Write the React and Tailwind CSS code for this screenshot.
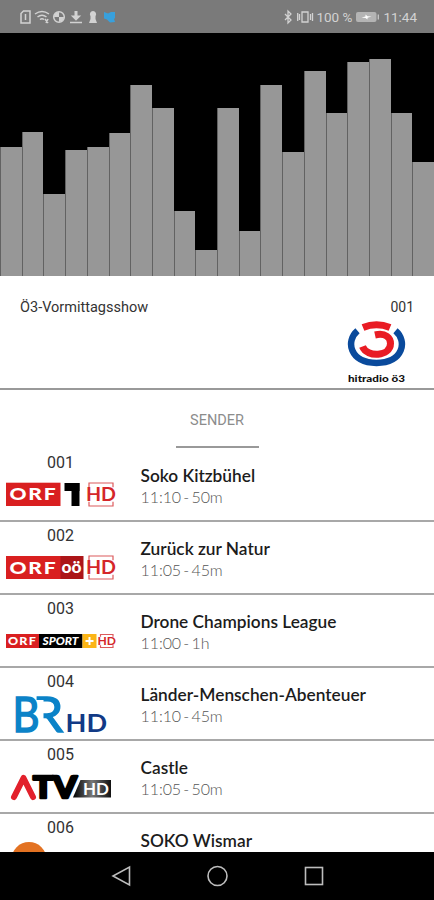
import React from 'react';

const bars = [129, 144, 82, 126, 129, 143, 191, 168, 65, 26, 168, 45, 191, 124, 205, 163, 214, 217, 163, 114];

const HdBadge = ({ x, y, width, height }) => (
    <g>
        <path
            d={`M${x + 2} ${y + height * 0.2}V${y + 0.5}H${x + width - 2}V${y + height * 0.2}M${x + 2} ${y + height * 0.8}V${y + height - 0.5}H${x + width - 2}V${y + height * 0.8}`}
            fill="none"
            stroke="#dc5a5c"
            strokeWidth="1.2"
        />
        <text
            x={x - 1}
            y={y + height * 0.76}
            textLength={width + 2}
            lengthAdjust="spacingAndGlyphs"
            fontSize={height * 0.75}
            fontWeight="700"
            fill="#d5262a"
        >
            HD
        </text>
    </g>
);

const OrfOneLogo = () => (
    <>
        <rect x="6" y="10.7" width="54.5" height="23.3" fill="#d91f20" />
        <text x="9.5" y="28.3" textLength="48" lengthAdjust="spacingAndGlyphs" letterSpacing="1.5" fontSize="17.5" fontWeight="900" fill="#fff">ORF</text>
        <rect x="64.5" y="11" width="15" height="8" fill="#000" />
        <rect x="71.5" y="11" width="8" height="23" fill="#000" />
        <HdBadge x={87} y={10.5} width={28} height={24} />
    </>
);

const OrfRegionLogo = () => (
    <>
        <rect x="6" y="11" width="55" height="23" fill="#d91f20" />
        <rect x="60.5" y="11" width="23" height="23" fill="#ac1518" />
        <text x="9.5" y="28.5" textLength="48" lengthAdjust="spacingAndGlyphs" letterSpacing="1.5" fontSize="17.5" fontWeight="900" fill="#fff">ORF</text>
        <text x="61.5" y="27.5" textLength="20" lengthAdjust="spacingAndGlyphs" fontSize="16" fontWeight="900" fill="#fff">oö</text>
        <HdBadge x={87} y={10.5} width={28} height={24} />
    </>
);

const OrfSportLogo = () => (
    <>
        <rect x="6" y="16" width="33" height="14" fill="#d91f20" />
        <rect x="39" y="16" width="43.5" height="14" fill="#000" />
        <rect x="82.5" y="16" width="14" height="14" fill="#fbb516" />
        <text x="8" y="26.8" textLength="29" lengthAdjust="spacingAndGlyphs" letterSpacing="1" fontSize="10.5" fontWeight="900" fill="#fff">ORF</text>
        <text x="42.5" y="26.8" textLength="36" lengthAdjust="spacingAndGlyphs" fontSize="10.5" fontWeight="900" fontStyle="italic" fill="#fff">SPORT</text>
        <path d="M89.5 19v8M85.5 23h8" stroke="#fff" strokeWidth="2" />
        <HdBadge x={98.5} y={16} width={16.5} height={14} />
    </>
);

const BrLogo = () => (
    <>
        <text x="33" y="40.7" textLength="30" lengthAdjust="spacingAndGlyphs" fontSize="49" fill="#0b83c8" stroke="#0b83c8" strokeWidth="1.6">R</text>
        {/* the R has no stem of its own */}
        <rect x="35" y="9" width="8.5" height="34" fill="#fff" />
        <text x="12.5" y="40.7" textLength="27" lengthAdjust="spacingAndGlyphs" fontSize="49" fill="#0b83c8" stroke="#0b83c8" strokeWidth="1.6">B</text>
        <text x="65.5" y="40.7" textLength="41.5" lengthAdjust="spacingAndGlyphs" fontSize="25.5" fontWeight="700" fill="#123a86">HD</text>
    </>
);

const AtvLogo = () => (
    <>
        <defs>
            <linearGradient id="atv-hd" x1="0" x2="1">
                <stop offset="0" stopColor="#000" />
                <stop offset="0.5" stopColor="#777" />
                <stop offset="1" stopColor="#111" />
            </linearGradient>
        </defs>
        <path d="M14 33l9.500-19 9.500 19" fill="none" stroke="#e2202b" strokeWidth="6" strokeLinecap="round" strokeLinejoin="round" />
        <text x="33" y="34" textLength="44" lengthAdjust="spacingAndGlyphs" fontSize="29.5" fontWeight="900" fill="#000" stroke="#000" strokeWidth="2.5" strokeLinejoin="round">TV</text>
        <path d="M80.500 16H111v17.500H73z" fill="url(#atv-hd)" />
        <text x="83" y="31" textLength="26" lengthAdjust="spacingAndGlyphs" fontSize="17.5" fontWeight="700" fill="#fff">HD</text>
    </>
);

const OrangeLogo = () => <circle cx="29" cy="22.5" r="17.5" fill="#e37222" />;

const channels = [
    { number: '001', title: 'Soko Kitzbühel', time: '11:10 - 50m', Logo: OrfOneLogo },
    { number: '002', title: 'Zurück zur Natur', time: '11:05 - 45m', Logo: OrfRegionLogo },
    { number: '003', title: 'Drone Champions League', time: '11:00 - 1h', Logo: OrfSportLogo },
    { number: '004', title: 'Länder-Menschen-Abenteuer', time: '11:10 - 45m', Logo: BrLogo },
    { number: '005', title: 'Castle', time: '11:05 - 50m', Logo: AtvLogo },
    { number: '006', title: 'SOKO Wismar', Logo: OrangeLogo },
];

const StatusBar = () => (
    <div className="h-[33px] shrink-0 bg-[#7a7a7a] flex items-center justify-between pl-5 pr-[17px] text-[#d2d2d2]">
        <svg className="w-[100px] h-4" viewBox="0 0 100 16" fill="none" stroke="currentColor" strokeWidth="1.5">
            <path d="M1 4.500L3.500 2H10v12H1zM5.500 5v6" />
            <path d="M15 5q7-5 14 0M17.500 8q4.500-3.500 9 0M20 10.500q2-1.500 4 0M25 10l3 4M28 10l-2 4" />
            <circle cx="39" cy="8" r="5.300" />
            <path d="M39 3v5h-5a5 5 0 0 1 5-5zM39 8h5a5 5 0 0 1-5 5z" fill="currentColor" stroke="none" />
            <path d="M54.500 2h3v4.500h3.700L56 11.800 50.800 6.500h3.700zM50 12.800h12v1.500H50z" fill="currentColor" stroke="none" />
            <path d="M73 2a3.300 3.300 0 0 1 2.500 5.200V10l1.500 4h-8l1.500-4V7.200A3.300 3.300 0 0 1 73 2z" fill="currentColor" stroke="none" />
            <path d="M84 3l4 1.500 3-1.500h4v6l-1 1 1 3-5 .5-3-3-3-1z" fill="#38a0dc" stroke="none" />
        </svg>
        <div className="flex items-center font-[Roboto] text-[13.5px] leading-4">
            <svg className="w-[32px] h-4" viewBox="0 0 32 16" fill="none" stroke="currentColor" strokeWidth="1.3">
                <path d="M1 5l6 6-3 3V2l3 3-6 6" />
                <path d="M18 3h6v10h-6zM15.500 5v6M26.500 5v6M13.700 4v8M28.500 4v8" />
            </svg>
            <span className="whitespace-nowrap">100 %</span>
            <svg className="w-6 h-4 ml-1" viewBox="0 0 24 16">
                <rect x="0" y="3" width="20.500" height="10" rx="2" fill="#b4b4b4" />
                <path d="M5.500 8.500l4-1V5.500l2 1.800 4 .2-4 1.200v1.800l-2-1.600z" fill="#fff" />
                <path d="M22.300 5.500v5" stroke="#c8c8c8" strokeWidth="1.300" />
            </svg>
            <span className="ml-[3px]">11:44</span>
        </div>
    </div>
);

const Visualizer = () => (
    <div className="h-[243px] shrink-0 bg-black flex items-end">
        {bars.map((height, i) => (
            <div key={i} className="flex-1 bg-[#979797] border-l border-[#626262]" style={{ height }}></div>
        ))}
    </div>
);

const HitradioLogo = () => (
    <svg className="w-[60px] h-16" viewBox="0 0 60 64" fill="none">
        <path d="M11.500 10.800C-0.500 21 3.500 42.500 30.500 43C57.500 42.500 61.500 21 49.500 10.800" stroke="#0a4a9c" strokeWidth="6.500" />
        <path d="M17 7.500Q30.500 2 44 7.500" stroke="#e91c24" strokeWidth="7" />
        <path d="M29 15C40 12.500 44.500 18 44.500 23.500C44.500 36.500 21 38 16.500 26.500" stroke="#e91c24" strokeWidth="7" />
        <text x="2" y="61.500" textLength="57" lengthAdjust="spacingAndGlyphs" fontFamily="Lato, sans-serif" fontWeight="900" fontSize="10" fill="#111">hitradio ö3</text>
    </svg>
);

const ChannelRow = ({ channel }) => {
    const { number, title, time, Logo } = channel;
    return (
        <li className="h-[73px] shrink-0 flex border-b-2 border-[#a8a8a8]">
            <div className="w-[120px] pt-1 flex flex-col items-center">
                <span className="pl-px font-[Roboto] text-base leading-5 text-[#333]">{number}</span>
                <svg className="w-[120px] h-12 shrink-0 -mt-px overflow-visible" viewBox="0 0 120 48" fontFamily="Lato, sans-serif">
                    <Logo />
                </svg>
            </div>
            <div className="pl-[20.5px] pt-4 font-[Lato] whitespace-nowrap">
                <p className="text-[17.3px] leading-[22px] font-semibold text-[#1c1c1c]">{title}</p>
                {time && (
                    <p className="text-base leading-[20px] font-light tracking-[-0.005em] [word-spacing:-2px] text-[#555]">{time}</p>
                )}
            </div>
        </li>
    );
};

const NavBar = () => (
    <div className="h-12 shrink-0 bg-black flex items-center justify-center">
        <svg className="w-[220px] h-6" viewBox="0 0 220 24" fill="none" stroke="#bdbdbd" strokeWidth="1.6">
            <path d="M22.500 3v18L6 12z" />
            <circle cx="110.500" cy="12" r="9.500" />
            <rect x="198.500" y="3.500" width="17" height="17" />
        </svg>
    </div>
);

const App = () => {
    return (
        <div className="w-full h-[900px] bg-white flex flex-col overflow-hidden">
            <StatusBar />
            <Visualizer />

            <section className="h-[114px] shrink-0 border-b-2 border-[#999] flex justify-between pl-5 pt-5">
                <h1 className="pt-px font-[Roboto] text-[14.5px] leading-[22px] text-[#333]">Ö3-Vormittagsshow</h1>
                <div className="flex flex-col items-end pr-5">
                    <span className="font-[Roboto] text-sm leading-[22px] text-[#333]">001</span>
                    <div className="pt-[2px] pr-[8px]">
                        <HitradioLogo />
                    </div>
                </div>
            </section>

            <nav className="h-[59px] shrink-0 flex justify-center">
                <button className="w-[83px] h-[58px] border-b-2 border-[#999] font-[Roboto] text-[14.5px] text-[#8c8c8c] pt-1.5">
                    SENDER
                </button>
            </nav>

            <ul className="flex-1 min-h-0 flex flex-col overflow-hidden">
                {channels.map((channel) => (
                    <ChannelRow key={channel.number} channel={channel} />
                ))}
            </ul>

            <NavBar />
        </div>
    );
};

export default App;
